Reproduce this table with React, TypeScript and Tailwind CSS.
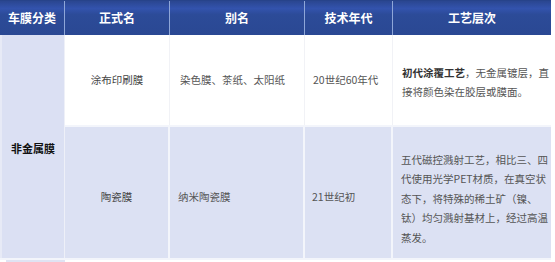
import React from "react";

const font = { fontFamily: '"Noto Sans CJK SC", "Noto Sans", sans-serif' };

export default function App() {
  const hdr =
    "flex items-center justify-center text-white font-bold text-[12px] border-r border-[#8ea6d8]";
  return (
    <div className="w-[555px] h-[262px] bg-white overflow-hidden" style={font}>
      <div className="grid grid-cols-[65px_105px_135px_88px_158px] grid-rows-[35px_90px_133px_6px] w-[551px]">
        {/* header */}
        <div className="col-span-5 grid grid-cols-[65px_105px_135px_88px_158px] bg-[linear-gradient(to_bottom,#2a4690_0%,#3353ad_22%,#2c4b98_40%,#2a4893_100%)] border-t border-[#27438a]">
          <div className={hdr}>车膜分类</div>
          <div className={hdr}>正式名</div>
          <div className={hdr}>别名</div>
          <div className={hdr}>技术年代</div>
          <div className="flex items-center justify-center text-white font-bold text-[12px]">
            工艺层次
          </div>
        </div>

        {/* merged first column */}
        <div className="row-span-2 bg-[#dbe0f3] border-l-2 border-[#e7eaf6] border-r border-r-[#eef0f8] flex items-center justify-center pt-[4px] text-[11px] font-bold text-[#111]">
          非金属膜
        </div>

        {/* row 1 */}
        <div className="bg-white border-r border-[#f1f2f6] flex items-center justify-center text-[10.5px] text-[#444]">
          涂布印刷膜
        </div>
        <div className="bg-white border-r border-[#f1f2f6] flex items-center pl-[10px] text-[10.5px] text-[#555]">
          染色膜、茶纸、太阳纸
        </div>
        <div className="bg-white border-r border-[#f1f2f6] flex items-center pl-[8px] text-[10.5px] text-[#555]">
          20世纪60年代
        </div>
        <div className="bg-white flex items-center pl-[9px] pt-[4px] text-[10.5px] leading-[19px] text-[#555]">
          <div>
            <span className="font-bold text-[#333]">初代涂覆工艺</span>，无金属镀层，直
            <br />
            接将颜色染在胶层或膜面。
          </div>
        </div>

        {/* row 2 */}
        <div className="bg-[#dce1f3] border-t-2 border-t-[#f3f5fb] border-r-2 border-r-[#f3f5fb] flex items-center justify-center pt-[8px] text-[10.5px] text-[#444]">
          陶瓷膜
        </div>
        <div className="bg-[#dce1f3] border-t-2 border-t-[#f3f5fb] border-r-2 border-r-[#f3f5fb] flex items-center pl-[8px] pt-[8px] text-[10.5px] text-[#555]">
          纳米陶瓷膜
        </div>
        <div className="bg-[#dce1f3] border-t-2 border-t-[#f3f5fb] border-r-2 border-r-[#f3f5fb] flex items-center pl-[7px] pt-[8px] text-[10.5px] text-[#555]">
          21世纪初
        </div>
        <div className="bg-[#dce1f3] border-t-2 border-t-[#f3f5fb] flex items-center pl-[8px] pt-[12px] text-[10.5px] leading-[19.5px] text-[#555]">
          <div>
            五代磁控溅射工艺，相比三、四
            <br />
            代使用光学PET材质，在真空状
            <br />
            态下，将特殊的稀土矿（镍、
            <br />
            钛）均匀溅射基材上，经过高温
            <br />
            蒸发。
          </div>
        </div>

        {/* start of next row */}
        <div className="border-t-2 border-[#f3f5fb] pl-[6px]">
          <div className="h-full bg-[#dfe3f3]" />
        </div>
        <div className="col-span-4 border-t-2 border-[#f3f5fb] bg-white" />
      </div>
    </div>
  );
}
